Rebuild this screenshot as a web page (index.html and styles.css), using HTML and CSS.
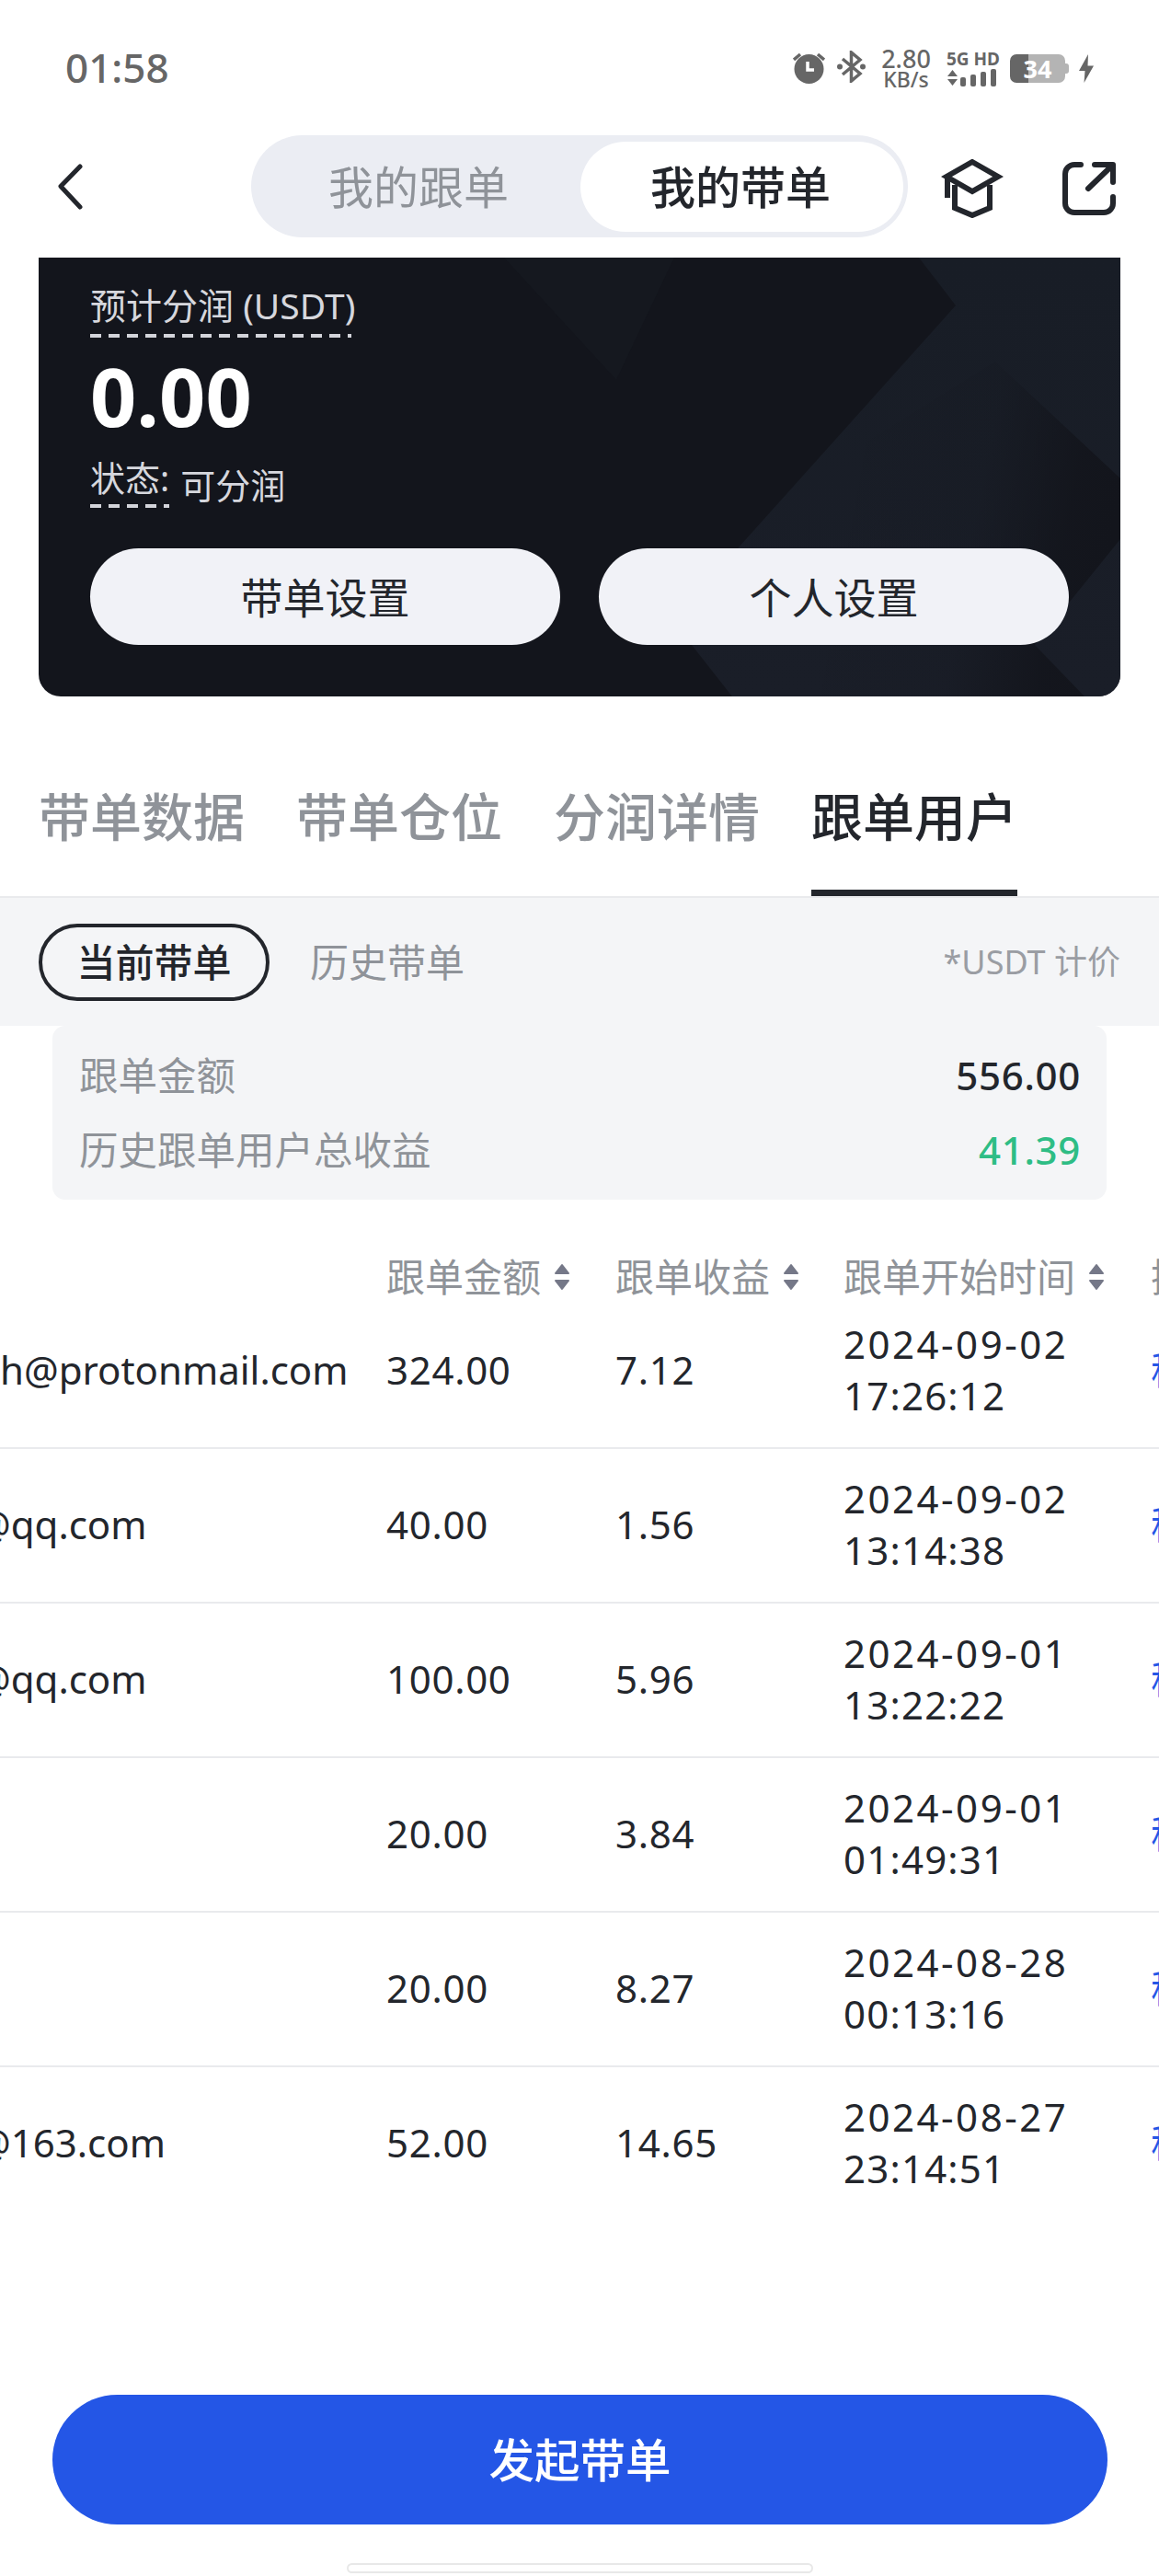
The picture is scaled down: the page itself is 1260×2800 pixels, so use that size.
FILE: index.html
```html
<!DOCTYPE html>
<html lang="zh-CN">
<head>
<meta charset="utf-8">
<title>我的带单</title>
<link rel="stylesheet" href="styles.css">
</head>
<body>
<div class="page">
  <header class="status">
    <span class="time">01:58</span>
    <div class="status-icons">
      <svg class="ic-alarm" viewBox="0 0 35 35"><path d="M1 9 8 3M34 9 27 3" class="s-line"/><circle cx="17.500" cy="19" r="16" class="s-fill"/><path d="M16 11v9h7" class="s-hand"/></svg>
      <svg class="ic-bt" viewBox="0 0 31 35"><path d="M6 9 25 25 15.500 33V2L25 10 6 26" class="s-line"/><circle cx="3" cy="17.500" r="3" class="s-fill"/><circle cx="28" cy="17.500" r="3" class="s-fill"/></svg>
      <div class="speed"><span class="speed-num">2.80</span><span class="speed-unit">KB/s</span></div>
      <div class="net">
        <span class="net-label">5G HD</span>
        <svg class="ic-bars" viewBox="0 0 56 19"><path d="M1 8 6.500 1 12 8ZM1 11 12 11 6.500 18Z" class="s-fill"/><rect x="15" y="9" width="6" height="10" rx="2" class="s-fill"/><rect x="26" y="6" width="6" height="13" rx="2" class="s-fill"/><rect x="37" y="3" width="6" height="16" rx="2" class="s-fill"/><rect x="48" y="0" width="6" height="19" rx="2" class="s-fill"/></svg>
      </div>
      <div class="battery"><span>34</span></div>
      <svg class="ic-bolt" viewBox="0 0 16 31"><path d="M10 0 0 18H6.500L5.500 31 16 12.500H9.500Z" class="s-fill"/></svg>
    </div>
  </header>

  <nav class="nav">
    <svg class="ic-back" viewBox="0 0 27 50"><path d="M24 3 3 24.500 24 47"/></svg>
    <div class="switch">
      <span class="switch-item">我的跟单</span>
      <span class="switch-item switch-on">我的带单</span>
    </div>
    <svg class="ic-cap" viewBox="0 0 68 64"><path d="M34 3 62 19 34 35 6 19Z"/><path d="M15 28V53L34 61 53 53V28"/><path d="M7 20V42"/></svg>
    <svg class="ic-share" viewBox="0 0 58 58"><path d="M20 3H13A10 10 0 0 0 3 13V45A10 10 0 0 0 13 55H45A10 10 0 0 0 55 45V38"/><path d="M28 29 54 4M35 3H55V22"/></svg>
  </nav>

  <section class="card">
    <svg class="card-bg" viewBox="0 0 1176 477" preserveAspectRatio="none">
      <defs>
        <linearGradient id="shade" x1="0" x2="1" y1="0.2" y2="0.4">
          <stop offset="0" stop-color="#13151c" stop-opacity="0"/>
          <stop offset="0.55" stop-color="#13151c" stop-opacity="0.15"/>
          <stop offset="0.85" stop-color="#13151c" stop-opacity="0.9"/>
          <stop offset="1" stop-color="#13151c"/>
        </linearGradient>
        <linearGradient id="light" x1="0" x2="0" y1="0" y2="1">
          <stop offset="0" stop-color="#181d26"/>
          <stop offset="1" stop-color="#1a1e28"/>
        </linearGradient>
      </defs>
      <path d="M506 0 628 133 691 0Z" fill="#15181f"/>
      <path d="M957 0H1176V477H754L710 421 761 315 997 52Z" fill="url(#light)"/>
      <path d="M1040 113 1176 240V306L1083 421 1137 477H850L900 200Z" fill="url(#shade)"/>
    </svg>
    <div class="card-body">
      <div class="row-label"><span class="dashed dashed-long">预计分润 (USDT)</span></div>
      <div class="card-value">0.00</div>
      <div class="card-status"><span class="dashed">状态:</span><span class="status-val">可分润</span></div>
      <div class="card-actions">
        <button class="btn-light">带单设置</button>
        <button class="btn-light">个人设置</button>
      </div>
    </div>
  </section>

  <div class="tabs">
    <span class="tab">带单数据</span>
    <span class="tab">带单仓位</span>
    <span class="tab">分润详情</span>
    <span class="tab tab-on">跟单用户</span>
  </div>

  <div class="band">
    <span class="chip chip-on">当前带单</span>
    <span class="chip">历史带单</span>
    <span class="unit">*USDT 计价</span>
  </div>

  <div class="summary">
    <div class="sum-row"><span>跟单金额</span><span class="sum-val">556.00</span></div>
    <div class="sum-row"><span>历史跟单用户总收益</span><span class="sum-val sum-up">41.39</span></div>
  </div>

  <div class="table">
    <div class="t-row t-head">
      <span></span>
      <span class="t-h">跟单金额<svg class="sort" viewBox="0 0 18 30"><path d="M9 2 16 11H2ZM2 19H16L9 28Z"/></svg></span>
      <span class="t-h">跟单收益<svg class="sort" viewBox="0 0 18 30"><path d="M9 2 16 11H2ZM2 19H16L9 28Z"/></svg></span>
      <span class="t-h">跟单开始时间<svg class="sort" viewBox="0 0 18 30"><path d="M9 2 16 11H2ZM2 19H16L9 28Z"/></svg></span>
      <span class="t-h t-act">操作</span>
    </div>
    <div class="t-row t-line">
      <span class="t-mail">nh@protonmail.com</span><span class="t-num">324.00</span><span class="t-num">7.12</span>
      <span class="t-date"><span class="t-d">2024-09-02</span><span class="t-t">17:26:12</span></span><span class="t-act t-link">移除</span>
    </div>
    <div class="t-row t-line">
      <span class="t-mail">@qq.com</span><span class="t-num">40.00</span><span class="t-num">1.56</span>
      <span class="t-date"><span class="t-d">2024-09-02</span><span class="t-t">13:14:38</span></span><span class="t-act t-link">移除</span>
    </div>
    <div class="t-row t-line">
      <span class="t-mail">@qq.com</span><span class="t-num">100.00</span><span class="t-num">5.96</span>
      <span class="t-date"><span class="t-d">2024-09-01</span><span class="t-t">13:22:22</span></span><span class="t-act t-link">移除</span>
    </div>
    <div class="t-row t-line">
      <span class="t-mail"></span><span class="t-num">20.00</span><span class="t-num">3.84</span>
      <span class="t-date"><span class="t-d">2024-09-01</span><span class="t-t">01:49:31</span></span><span class="t-act t-link">移除</span>
    </div>
    <div class="t-row t-line">
      <span class="t-mail"></span><span class="t-num">20.00</span><span class="t-num">8.27</span>
      <span class="t-date"><span class="t-d">2024-08-28</span><span class="t-t">00:13:16</span></span><span class="t-act t-link">移除</span>
    </div>
    <div class="t-row t-line t-last">
      <span class="t-mail">@163.com</span><span class="t-num">52.00</span><span class="t-num">14.65</span>
      <span class="t-date"><span class="t-d">2024-08-27</span><span class="t-t">23:14:51</span></span><span class="t-act t-link">移除</span>
    </div>
  </div>

  <button class="cta">发起带单</button>
  <div class="home"></div>
</div>
</body>
</html>
```

FILE: styles.css
```css
* { box-sizing: border-box; }
html, body { margin: 0; padding: 0; background: #fff; }
body { font-family: "Noto Sans", "Noto Sans CJK SC", sans-serif; color: #23262c; }
button { font-family: inherit; border: 0; padding: 0; }
.page { width: 1260px; height: 2800px; overflow: hidden; background: #fff; }

/* status bar */
.status { height: 147px; padding: 48px 71px 0 71px; display: flex; align-items: flex-start; justify-content: space-between; color: #666; }
.time { font-size: 44px; line-height: 50px; font-weight: 500; color: #666; }
.status-icons { display: flex; align-items: flex-start; margin-top: 7px; }
.s-fill { fill: #666; stroke: none; }
.s-line { fill: none; stroke: #666; stroke-width: 3.5; }
.s-hand { fill: none; stroke: #fff; stroke-width: 3.5; }
.ic-alarm { width: 35px; height: 35px; margin-top: 1px; }
.ic-bt { width: 31px; height: 35px; margin-left: 13px; }
.speed { margin-left: 16px; margin-top: -2px; width: 56px; display: flex; flex-direction: column; align-items: center; color: #666; }
.speed-num { font-size: 27px; line-height: 22px; font-weight: 500; }
.speed-unit { font-size: 23px; line-height: 22px; font-weight: 500; }
.net { margin-left: 16px; width: 57px; display: flex; flex-direction: column; }
.net-label { font-size: 19px; line-height: 18px; font-weight: 700; white-space: nowrap; }
.ic-bars { width: 56px; height: 19px; margin-top: 2px; }
.battery { margin-left: 12px; margin-top: 4px; width: 60px; height: 31px; border-radius: 7px; background: linear-gradient(90deg, #666 0 33%, #b4b4b4 33%); position: relative; display: flex; align-items: center; justify-content: center; color: #fff; font-size: 27px; font-weight: 700; line-height: 31px; }
.battery::after { content: ""; position: absolute; right: -4px; top: 10px; width: 4px; height: 11px; border-radius: 0 3px 3px 0; background: #b4b4b4; }
.ic-bolt { width: 16px; height: 31px; margin-left: 15px; margin-top: 4px; }

/* nav */
.nav { height: 133px; padding-left: 63px; display: flex; align-items: flex-start; }
.ic-back { width: 27px; height: 50px; margin-top: 31px; fill: none; stroke: #23262c; stroke-width: 5; stroke-linecap: round; stroke-linejoin: round; }
.switch { width: 714px; height: 111px; margin-left: 183px; border-radius: 56px; background: #ebedf3; display: flex; padding: 7px 5px 6px 0; }
.switch-item { flex: 1; display: flex; align-items: center; justify-content: center; font-size: 49px; line-height: 56px; color: #8f9399; padding-left: 6px; }
.switch-on { flex: 0 0 351px; background: #fff; border-radius: 50px; color: #23262c; font-weight: 500; padding-left: 0; padding-right: 3px; }
.ic-cap { width: 68px; height: 64px; margin-left: 36px; margin-top: 26px; fill: none; stroke: #23262c; stroke-width: 6; }
.ic-share { width: 58px; height: 58px; margin-left: 64px; margin-top: 29px; fill: none; stroke: #23262c; stroke-width: 6; stroke-linecap: round; stroke-linejoin: round; }

/* dark card */
.card { margin: 0 42px; height: 477px; background: #13151c; border-radius: 0 0 24px 24px; overflow: hidden; position: relative; }
.card-bg { position: absolute; left: 0; top: 0; width: 100%; height: 100%; }
.card-body { position: relative; padding: 27px 56px 0; color: #d6d7dd; }
.row-label { display: flex; }
.dashed { display: inline-block; font-size: 38px; line-height: 50px; padding-bottom: 10px; background: repeating-linear-gradient(90deg, #d3d4da 0 12px, transparent 12px 20px) left bottom / 100% 4px no-repeat; white-space: nowrap; }
.dashed-long { font-size: 39px; background-size: 284px 4px; }
.card-value { margin-top: 18px; font-size: 88px; line-height: 90px; font-weight: 700; color: #fff; }
.card-status { margin-top: 19px; display: flex; align-items: flex-end; gap: 12px; }
.card-status .dashed { padding-bottom: 8px; }
.status-val { font-size: 38px; line-height: 50px; }
.card-actions { display: flex; gap: 42px; margin-top: 44px; }
.btn-light { width: 511px; height: 105px; border-radius: 53px; background: #f1f2f7; color: #23262c; font-size: 46px; font-weight: 400; line-height: 56px; }

/* tabs */
.tabs { height: 217px; padding-left: 42px; display: flex; align-items: flex-end; gap: 56px; }
.tab { width: 224px; font-size: 56px; line-height: 76px; padding-bottom: 49px; color: #8f9399; font-weight: 500; white-space: nowrap; }
.tab-on { color: #23262c; border-bottom: 7px solid #23262c; padding-bottom: 42px; }

/* filter band */
.band { height: 141px; background: #f4f5f7; border-top: 2px solid #e9eaed; padding: 28px 42px 0; display: flex; align-items: flex-start; }
.chip { height: 84px; display: flex; align-items: center; font-size: 42px; line-height: 50px; color: #8f9399; }
.chip-on { width: 251px; justify-content: center; border: 4px solid #23262c; border-radius: 42px; color: #23262c; font-weight: 500; margin-right: 44px; }
.unit { margin-left: auto; font-size: 36px; line-height: 84px; color: #9a9da3; white-space: nowrap; }

/* summary */
.summary { margin: 0 57px; height: 189px; padding: 13px 28px 14px 29px; background: #f4f5f7; border-radius: 14px; }
.sum-row { height: 81px; display: flex; align-items: center; justify-content: space-between; font-size: 42.500px; line-height: 50px; color: #8f9399; }
.sum-val { color: #23262c; font-weight: 500; font-size: 42px; letter-spacing: 0.7px; }
.sum-up { color: #2ebd85; }

/* table */
.t-row { display: grid; grid-template-columns: 420px 249px 248px 334px 9px; align-items: center; font-size: 42px; }
.t-head { height: 103px; align-items: end; padding-bottom: 1px; color: #8f9399; line-height: 36px; }
.t-line { height: 168px; border-bottom: 2px solid #e9eaed; padding-bottom: 2px; color: #23262c; line-height: 56px; }
.t-last { border-bottom: 0; padding-bottom: 4px; }
.t-mail { margin-left: -26px; white-space: nowrap; min-width: 0; }
.t-num { letter-spacing: 0.7px; }
.t-h { display: flex; align-items: center; white-space: nowrap; }
.t-d, .t-t { display: block; }
.t-d { letter-spacing: 2.5px; }
.t-t { letter-spacing: 1.2px; }
.t-act { white-space: nowrap; }
.t-link { color: #2456e6; }
.sort { flex: none; width: 18px; height: 30px; margin-left: 14px; fill: #757888; stroke: #757888; stroke-width: 2; stroke-linejoin: round; }

/* footer */
.cta { display: block; width: 1147px; height: 141px; margin: 188px 0 0 57px; border-radius: 71px; background: #2456e6; color: #fff; font-size: 49.500px; font-weight: 500; line-height: 56px; }
.home { width: 507px; height: 11px; margin: 42px 0 0 377px; border: 2px solid #e8e8e8; border-radius: 6px; background: #fff; }
```
